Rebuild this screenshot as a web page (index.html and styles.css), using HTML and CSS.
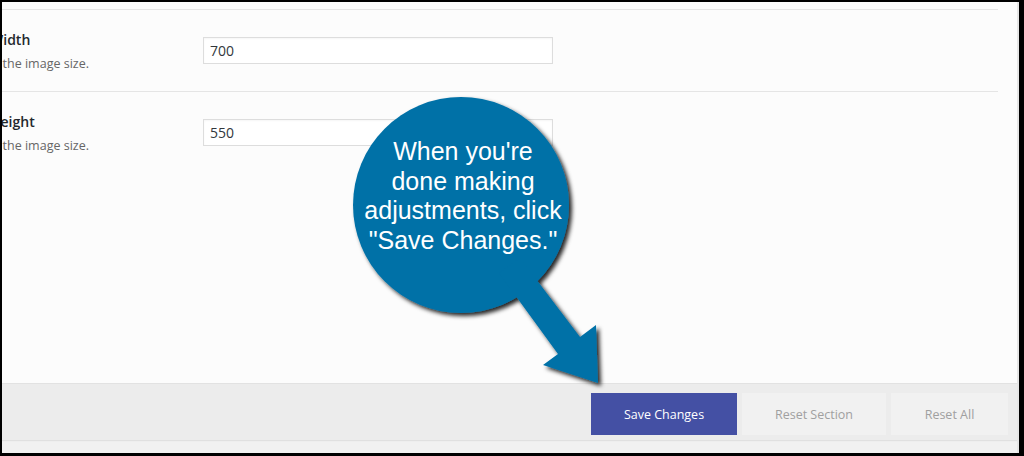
FILE: index.html
```html
<!DOCTYPE html>
<html lang="en">
<head>
  <meta charset="UTF-8">
  <meta name="viewport" content="width=device-width, initial-scale=1.0">
  <title>Image Settings</title>
  <link rel="stylesheet" href="styles.css">
</head>
<body>
  <div id="frame">
    <div id="panel">
      <div id="fields">
        <div class="row">
          <div class="label">
            <h4>Width</h4>
            <p>Set the image size.</p>
          </div>
          <div class="field"><input type="text" value="700"></div>
        </div>
        <div class="row">
          <div class="label">
            <h4>Height</h4>
            <p>Set the image size.</p>
          </div>
          <div class="field"><input type="text" value="550"></div>
        </div>
      </div>

      <div id="footer">
        <button class="btn btn-primary">Save Changes</button>
        <button class="btn">Reset Section</button>
        <button class="btn btn-small">Reset All</button>
      </div>
    </div>
  </div>

  <div id="callout">
    <svg width="1024" height="456" viewBox="0 0 1024 456">
      <defs>
        <filter id="shadow" x="-20%" y="-20%" width="140%" height="140%">
          <feDropShadow dx="3" dy="3" stdDeviation="2" flood-color="#000" flood-opacity="0.85"/>
        </filter>
      </defs>
      <g filter="url(#shadow)" fill="#0571a7">
        <circle cx="461" cy="205" r="108"/>
        <polygon points="520,258 580,337 596,325 598,383 543,365 558,354 499,273"/>
      </g>
    </svg>
    <div class="bubble-text">When you're<br>done making<br>adjustments, click<br>"Save Changes."</div>
  </div>
</body>
</html>
```

FILE: styles.css
```css
body {
  margin: 0;
  width: 1024px;
  height: 456px;
  background: #000;
  overflow: hidden;
  position: relative;
  font-family: 'Open Sans', 'Noto Sans', sans-serif;
}

#frame {
  margin: 2px 5px 0 2px;
  height: 451px;
  background: #f1f1f1;
  border-right: 2px solid #e6e6e6;
  overflow: hidden;
}

#panel {
  height: 438px;
  background: #fcfcfc;
  box-shadow: 0 1px 1px rgba(0, 0, 0, 0.07);
  display: flex;
  flex-direction: column;
}

#fields {
  flex: 1;
  padding-top: 7px;
  margin-right: 19px;
}

.row {
  display: flex;
  height: 82px;
  box-sizing: border-box;
  border-top: 1px solid #e5e5e5;
}

.label {
  width: 213px;
  margin-left: -12px;
  padding-top: 21px;
}

.label h4 {
  margin: 0;
  font-size: 14px;
  font-weight: 600;
  line-height: 18px;
  color: #23282d;
}

.label p {
  margin: 6px 0 0 -9px;
  font-size: 12.5px;
  line-height: 18px;
  color: #666;
}

.field {
  padding-top: 27px;
}

.field input {
  width: 350px;
  height: 27px;
  box-sizing: border-box;
  border: 1px solid #ddd;
  background: #fff;
  padding: 0 6px;
  font-family: inherit;
  font-size: 14px;
  color: #32373c;
  box-shadow: inset 0 1px 2px rgba(0, 0, 0, 0.04);
  outline: none;
}

#footer {
  display: flex;
  justify-content: flex-end;
  gap: 5px;
  height: 57px;
  box-sizing: border-box;
  padding: 9px 9px 6px;
  background: #ececec;
  border-top: 1px solid #e2e2e2;
}

.btn {
  width: 144px;
  height: 42px;
  border: none;
  background: #f1f1f1;
  color: #a0a0a0;
  font-family: inherit;
  font-size: 12.5px;
  cursor: pointer;
}

.btn-primary {
  width: 146px;
  background: #4450a4;
  color: #fff;
}

.btn-small {
  width: 117px;
}

#callout {
  position: absolute;
  left: 0;
  top: 0;
  width: 1024px;
  height: 456px;
  pointer-events: none;
}

#callout svg {
  display: block;
}

.bubble-text {
  position: absolute;
  left: 343px;
  top: 137px;
  width: 240px;
  text-align: center;
  font-family: 'Liberation Sans', Arial, sans-serif;
  font-size: 25px;
  line-height: 29.5px;
  color: #fff;
}
```
